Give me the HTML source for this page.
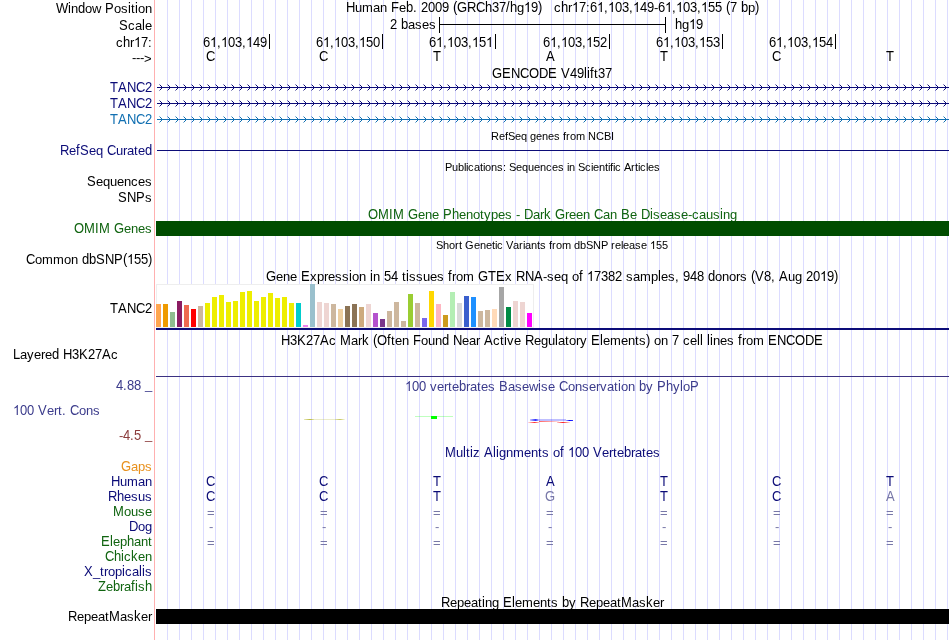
<!DOCTYPE html>
<html><head><meta charset="utf-8"><style>
html,body{margin:0;padding:0;background:#fff;width:950px;height:640px;overflow:hidden}
svg{display:block;will-change:transform}
text{font-family:"Liberation Sans",sans-serif;white-space:pre}
</style></head><body>
<svg width="950" height="640" viewBox="0 0 950 640">
<rect width="950" height="640" fill="#fff"/>
<defs><path id="one" d="M763 0L583 0L583 1147Q518 1085 412 1023Q306 961 222 930L222 1104Q373 1175 486 1276Q599 1377 646 1472L763 1472Z"/></defs>
<rect x="167" y="0" width="1" height="640" fill="#dcdcff"/>
<rect x="179" y="0" width="1" height="640" fill="#dcdcff"/>
<rect x="191" y="0" width="1" height="640" fill="#dcdcff"/>
<rect x="203" y="0" width="1" height="640" fill="#dcdcff"/>
<rect x="215" y="0" width="1" height="640" fill="#dcdcff"/>
<rect x="227" y="0" width="1" height="640" fill="#dcdcff"/>
<rect x="239" y="0" width="1" height="640" fill="#dcdcff"/>
<rect x="251" y="0" width="1" height="640" fill="#dcdcff"/>
<rect x="263" y="0" width="1" height="640" fill="#dcdcff"/>
<rect x="275" y="0" width="1" height="640" fill="#dcdcff"/>
<rect x="287" y="0" width="1" height="640" fill="#dcdcff"/>
<rect x="299" y="0" width="1" height="640" fill="#dcdcff"/>
<rect x="311" y="0" width="1" height="640" fill="#dcdcff"/>
<rect x="323" y="0" width="1" height="640" fill="#dcdcff"/>
<rect x="335" y="0" width="1" height="640" fill="#dcdcff"/>
<rect x="347" y="0" width="1" height="640" fill="#dcdcff"/>
<rect x="359" y="0" width="1" height="640" fill="#dcdcff"/>
<rect x="371" y="0" width="1" height="640" fill="#dcdcff"/>
<rect x="383" y="0" width="1" height="640" fill="#dcdcff"/>
<rect x="395" y="0" width="1" height="640" fill="#dcdcff"/>
<rect x="407" y="0" width="1" height="640" fill="#dcdcff"/>
<rect x="419" y="0" width="1" height="640" fill="#dcdcff"/>
<rect x="431" y="0" width="1" height="640" fill="#dcdcff"/>
<rect x="443" y="0" width="1" height="640" fill="#dcdcff"/>
<rect x="455" y="0" width="1" height="640" fill="#dcdcff"/>
<rect x="467" y="0" width="1" height="640" fill="#dcdcff"/>
<rect x="479" y="0" width="1" height="640" fill="#dcdcff"/>
<rect x="491" y="0" width="1" height="640" fill="#dcdcff"/>
<rect x="503" y="0" width="1" height="640" fill="#dcdcff"/>
<rect x="515" y="0" width="1" height="640" fill="#dcdcff"/>
<rect x="527" y="0" width="1" height="640" fill="#dcdcff"/>
<rect x="539" y="0" width="1" height="640" fill="#dcdcff"/>
<rect x="551" y="0" width="1" height="640" fill="#dcdcff"/>
<rect x="563" y="0" width="1" height="640" fill="#dcdcff"/>
<rect x="575" y="0" width="1" height="640" fill="#dcdcff"/>
<rect x="587" y="0" width="1" height="640" fill="#dcdcff"/>
<rect x="599" y="0" width="1" height="640" fill="#dcdcff"/>
<rect x="611" y="0" width="1" height="640" fill="#dcdcff"/>
<rect x="623" y="0" width="1" height="640" fill="#dcdcff"/>
<rect x="635" y="0" width="1" height="640" fill="#dcdcff"/>
<rect x="647" y="0" width="1" height="640" fill="#dcdcff"/>
<rect x="659" y="0" width="1" height="640" fill="#dcdcff"/>
<rect x="671" y="0" width="1" height="640" fill="#dcdcff"/>
<rect x="683" y="0" width="1" height="640" fill="#dcdcff"/>
<rect x="695" y="0" width="1" height="640" fill="#dcdcff"/>
<rect x="707" y="0" width="1" height="640" fill="#dcdcff"/>
<rect x="719" y="0" width="1" height="640" fill="#dcdcff"/>
<rect x="731" y="0" width="1" height="640" fill="#dcdcff"/>
<rect x="743" y="0" width="1" height="640" fill="#dcdcff"/>
<rect x="755" y="0" width="1" height="640" fill="#dcdcff"/>
<rect x="767" y="0" width="1" height="640" fill="#dcdcff"/>
<rect x="779" y="0" width="1" height="640" fill="#dcdcff"/>
<rect x="791" y="0" width="1" height="640" fill="#dcdcff"/>
<rect x="803" y="0" width="1" height="640" fill="#dcdcff"/>
<rect x="815" y="0" width="1" height="640" fill="#dcdcff"/>
<rect x="827" y="0" width="1" height="640" fill="#dcdcff"/>
<rect x="839" y="0" width="1" height="640" fill="#dcdcff"/>
<rect x="851" y="0" width="1" height="640" fill="#dcdcff"/>
<rect x="863" y="0" width="1" height="640" fill="#dcdcff"/>
<rect x="875" y="0" width="1" height="640" fill="#dcdcff"/>
<rect x="887" y="0" width="1" height="640" fill="#dcdcff"/>
<rect x="899" y="0" width="1" height="640" fill="#dcdcff"/>
<rect x="911" y="0" width="1" height="640" fill="#dcdcff"/>
<rect x="923" y="0" width="1" height="640" fill="#dcdcff"/>
<rect x="935" y="0" width="1" height="640" fill="#dcdcff"/>
<rect x="947" y="0" width="1" height="640" fill="#dcdcff"/>
<rect x="154" y="0" width="1" height="640" fill="#ffb0b0"/>
<text x="71 85 92 114 121 131 138 145" y="13" fill="#000" font-size="13">nowoston</text>
<text x="56 68 78 105 128 135" y="13" fill="#000" font-size="13" transform="matrix(1 0 0 1.111 0 -1.443)">WidPii</text>
<text x="128 135 145" y="30" fill="#000" font-size="13">cae</text>
<text x="119 142" y="30" fill="#000" font-size="13" transform="matrix(1 0 0 1.111 0 -3.330)">Sl</text>
<use href="#one" fill="#000" transform="matrix(0.006348 0 0 -0.006793 134 47)"/>
<text x="116 130 148" y="47" fill="#000" font-size="13">cr:</text>
<text x="123 141" y="47" fill="#000" font-size="13" transform="matrix(1 0 0 1.111 0 -5.217)">h7</text>
<text x="132 136 140" y="62" fill="#000" font-size="13">---</text>
<text x="144" y="63" fill="#000" font-size="13">&gt;</text>
<text x="110 118 127 136 145" y="92" fill="#0c0c78" font-size="13" transform="matrix(1 0 0 1.111 0 -10.212)">TANC2</text>
<text x="110 118 127 136 145" y="108" fill="#0c0c78" font-size="13" transform="matrix(1 0 0 1.111 0 -11.988)">TANC2</text>
<text x="110 118 127 136 145" y="124" fill="#1270b2" font-size="13" transform="matrix(1 0 0 1.111 0 -13.764)">TANC2</text>
<text x="69 89 96 116 123 127 134 138" y="155" fill="#0c0c78" font-size="13">eequrate</text>
<text x="60 76 80 107 145" y="155" fill="#0c0c78" font-size="13" transform="matrix(1 0 0 1.111 0 -17.205)">RfSCd</text>
<text x="96 103 110 117 124 131 138 145" y="186" fill="#000" font-size="13">equences</text>
<text x="87" y="186" fill="#000" font-size="13" transform="matrix(1 0 0 1.111 0 -20.646)">S</text>
<text x="145" y="202" fill="#000" font-size="13">s</text>
<text x="118 127 136" y="202" fill="#000" font-size="13" transform="matrix(1 0 0 1.111 0 -22.422)">SNP</text>
<text x="124 131 138 145" y="233" fill="#106410" font-size="13">enes</text>
<text x="74 84 95 99 114" y="233" fill="#106410" font-size="13" transform="matrix(1 0 0 1.111 0 -25.863)">OMIMG</text>
<use href="#one" fill="#000" transform="matrix(0.006348 0 0 -0.006793 127 264)"/>
<text x="35 42 53 64 71" y="264" fill="#000" font-size="13">ommon</text>
<text x="26 82 89 96 105 114 123 134 141 148" y="264" fill="#000" font-size="13" transform="matrix(1 0 0 1.111 0 -29.304)">CdbSNP(55)</text>
<text x="110 118 127 136 145" y="313" fill="#000" font-size="13" transform="matrix(1 0 0 1.111 0 -34.743)">TANC2</text>
<text x="20 27 34 41 45 111" y="359" fill="#000" font-size="13">ayerec</text>
<text x="13 52 63 72 79 88 95 102" y="359" fill="#000" font-size="13" transform="matrix(1 0 0 1.111 0 -39.849)">LdH3K27A</text>
<text x="123" y="390" fill="#3c3c8c" font-size="13">.</text>
<text x="116 127 134" y="390" fill="#3c3c8c" font-size="13" transform="matrix(1 0 0 1.111 0 -43.290)">488</text>
<text x="145" y="389" fill="#3c3c8c" font-size="13">_</text>
<use href="#one" fill="#3c3c8c" transform="matrix(0.006348 0 0 -0.006793 13 415)"/>
<text x="47 54 58 62 79 86 93" y="415" fill="#3c3c8c" font-size="13">ert.ons</text>
<text x="20 27 38 70" y="415" fill="#3c3c8c" font-size="13" transform="matrix(1 0 0 1.111 0 -46.065)">00VC</text>
<text x="119 130" y="440" fill="#8c3c3c" font-size="13">-.</text>
<text x="123 134" y="440" fill="#8c3c3c" font-size="13" transform="matrix(1 0 0 1.111 0 -48.840)">45</text>
<text x="145" y="439" fill="#8c3c3c" font-size="13">_</text>
<text x="131 138 145" y="471" fill="#e8901c" font-size="13">aps</text>
<text x="121" y="471" fill="#e8901c" font-size="13" transform="matrix(1 0 0 1.111 0 -52.281)">G</text>
<text x="120 127 138 145" y="486" fill="#0c0c78" font-size="13">uman</text>
<text x="111" y="486" fill="#0c0c78" font-size="13" transform="matrix(1 0 0 1.111 0 -53.946)">H</text>
<text x="124 131 138 145" y="501" fill="#0c0c78" font-size="13">esus</text>
<text x="108 117" y="501" fill="#0c0c78" font-size="13" transform="matrix(1 0 0 1.111 0 -55.611)">Rh</text>
<text x="124 131 138 145" y="516" fill="#106410" font-size="13">ouse</text>
<text x="113" y="516" fill="#106410" font-size="13" transform="matrix(1 0 0 1.111 0 -57.276)">M</text>
<text x="138 145" y="531" fill="#0c0c78" font-size="13">og</text>
<text x="129" y="531" fill="#0c0c78" font-size="13" transform="matrix(1 0 0 1.111 0 -58.941)">D</text>
<text x="113 120 134 141 148" y="546" fill="#106410" font-size="13">epant</text>
<text x="101 110 127" y="546" fill="#106410" font-size="13" transform="matrix(1 0 0 1.111 0 -60.606)">Elh</text>
<text x="124 138 145" y="561" fill="#106410" font-size="13">cen</text>
<text x="105 114 121 131" y="561" fill="#106410" font-size="13" transform="matrix(1 0 0 1.111 0 -62.271)">Chik</text>
<text x="93 100 104 108 115 125 132 145" y="576" fill="#0c0c78" font-size="13">_tropcas</text>
<text x="84 122 139 142" y="576" fill="#0c0c78" font-size="13" transform="matrix(1 0 0 1.111 0 -63.936)">Xili</text>
<text x="106 120 124 138" y="591" fill="#106410" font-size="13">eras</text>
<text x="98 113 131 135 145" y="591" fill="#106410" font-size="13" transform="matrix(1 0 0 1.111 0 -65.601)">Zbfih</text>
<text x="77 84 91 98 105 120 127 141 148" y="621" fill="#000" font-size="13">epeataser</text>
<text x="68 109 134" y="621" fill="#000" font-size="13" transform="matrix(1 0 0 1.111 0 -68.931)">RMk</text>
<use href="#one" fill="#000" transform="matrix(0.006348 0 0 -0.006793 524 12)"/>
<use href="#one" fill="#000" transform="matrix(0.006348 0 0 -0.006793 572 12)"/>
<use href="#one" fill="#000" transform="matrix(0.006348 0 0 -0.006793 597 12)"/>
<use href="#one" fill="#000" transform="matrix(0.006348 0 0 -0.006793 608 12)"/>
<use href="#one" fill="#000" transform="matrix(0.006348 0 0 -0.006793 633 12)"/>
<use href="#one" fill="#000" transform="matrix(0.006348 0 0 -0.006793 665 12)"/>
<use href="#one" fill="#000" transform="matrix(0.006348 0 0 -0.006793 676 12)"/>
<use href="#one" fill="#000" transform="matrix(0.006348 0 0 -0.006793 701 12)"/>
<text x="355 362 373 380 399 413 517 554 568 586 604 629 654 672 697 748" y="12" fill="#000" font-size="13">umane.gcr:,,-,,p</text>
<text x="346 391 406 421 428 435 442 453 457 467 476 485 492 499 506 510 531 538 561 579 590 615 622 640 647 658 683 690 708 715 726 730 741 755" y="12" fill="#000" font-size="13" transform="matrix(1 0 0 1.111 0 -1.332)">HFb2009(GRCh37/h9)h76034960355(7b)</text>
<rect x="439" y="17" width="1" height="16" fill="#000"/><rect x="665" y="17" width="1" height="16" fill="#000"/><rect x="439" y="24" width="227" height="1" fill="#000"/>
<text x="408 415 422 429" y="29" fill="#000" font-size="13">ases</text>
<text x="390 401" y="29" fill="#000" font-size="13" transform="matrix(1 0 0 1.111 0 -3.219)">2b</text>
<use href="#one" fill="#000" transform="matrix(0.006348 0 0 -0.006793 689 29)"/>
<text x="682" y="29" fill="#000" font-size="13">g</text>
<text x="675 696" y="29" fill="#000" font-size="13" transform="matrix(1 0 0 1.111 0 -3.219)">h9</text>
<rect x="269" y="34" width="1" height="15" fill="#000"/>
<use href="#one" fill="#000" transform="matrix(0.006348 0 0 -0.006793 210 47)"/>
<use href="#one" fill="#000" transform="matrix(0.006348 0 0 -0.006793 221 47)"/>
<use href="#one" fill="#000" transform="matrix(0.006348 0 0 -0.006793 246 47)"/>
<text x="217 242" y="47" fill="#000" font-size="13">,,</text>
<text x="203 228 235 253 260" y="47" fill="#000" font-size="13" transform="matrix(1 0 0 1.111 0 -5.217)">60349</text>
<rect x="382" y="34" width="1" height="15" fill="#000"/>
<use href="#one" fill="#000" transform="matrix(0.006348 0 0 -0.006793 323 47)"/>
<use href="#one" fill="#000" transform="matrix(0.006348 0 0 -0.006793 334 47)"/>
<use href="#one" fill="#000" transform="matrix(0.006348 0 0 -0.006793 359 47)"/>
<text x="330 355" y="47" fill="#000" font-size="13">,,</text>
<text x="316 341 348 366 373" y="47" fill="#000" font-size="13" transform="matrix(1 0 0 1.111 0 -5.217)">60350</text>
<rect x="495" y="34" width="1" height="15" fill="#000"/>
<use href="#one" fill="#000" transform="matrix(0.006348 0 0 -0.006793 436 47)"/>
<use href="#one" fill="#000" transform="matrix(0.006348 0 0 -0.006793 447 47)"/>
<use href="#one" fill="#000" transform="matrix(0.006348 0 0 -0.006793 472 47)"/>
<use href="#one" fill="#000" transform="matrix(0.006348 0 0 -0.006793 486 47)"/>
<text x="443 468" y="47" fill="#000" font-size="13">,,</text>
<text x="429 454 461 479" y="47" fill="#000" font-size="13" transform="matrix(1 0 0 1.111 0 -5.217)">6035</text>
<rect x="609" y="34" width="1" height="15" fill="#000"/>
<use href="#one" fill="#000" transform="matrix(0.006348 0 0 -0.006793 550 47)"/>
<use href="#one" fill="#000" transform="matrix(0.006348 0 0 -0.006793 561 47)"/>
<use href="#one" fill="#000" transform="matrix(0.006348 0 0 -0.006793 586 47)"/>
<text x="557 582" y="47" fill="#000" font-size="13">,,</text>
<text x="543 568 575 593 600" y="47" fill="#000" font-size="13" transform="matrix(1 0 0 1.111 0 -5.217)">60352</text>
<rect x="722" y="34" width="1" height="15" fill="#000"/>
<use href="#one" fill="#000" transform="matrix(0.006348 0 0 -0.006793 663 47)"/>
<use href="#one" fill="#000" transform="matrix(0.006348 0 0 -0.006793 674 47)"/>
<use href="#one" fill="#000" transform="matrix(0.006348 0 0 -0.006793 699 47)"/>
<text x="670 695" y="47" fill="#000" font-size="13">,,</text>
<text x="656 681 688 706 713" y="47" fill="#000" font-size="13" transform="matrix(1 0 0 1.111 0 -5.217)">60353</text>
<rect x="835" y="34" width="1" height="15" fill="#000"/>
<use href="#one" fill="#000" transform="matrix(0.006348 0 0 -0.006793 776 47)"/>
<use href="#one" fill="#000" transform="matrix(0.006348 0 0 -0.006793 787 47)"/>
<use href="#one" fill="#000" transform="matrix(0.006348 0 0 -0.006793 812 47)"/>
<text x="783 808" y="47" fill="#000" font-size="13">,,</text>
<text x="769 794 801 819 826" y="47" fill="#000" font-size="13" transform="matrix(1 0 0 1.111 0 -5.217)">60354</text>
<text x="206" y="61" fill="#000" font-size="13" transform="matrix(1 0 0 1.111 0 -6.771)">C</text>
<text x="319" y="61" fill="#000" font-size="13" transform="matrix(1 0 0 1.111 0 -6.771)">C</text>
<text x="433" y="61" fill="#000" font-size="13" transform="matrix(1 0 0 1.111 0 -6.771)">T</text>
<text x="546" y="61" fill="#000" font-size="13" transform="matrix(1 0 0 1.111 0 -6.771)">A</text>
<text x="660" y="61" fill="#000" font-size="13" transform="matrix(1 0 0 1.111 0 -6.771)">T</text>
<text x="772" y="61" fill="#000" font-size="13" transform="matrix(1 0 0 1.111 0 -6.771)">C</text>
<text x="886" y="61" fill="#000" font-size="13" transform="matrix(1 0 0 1.111 0 -6.771)">T</text>
<text x="594" y="78" fill="#000" font-size="13">t</text>
<text x="492 502 511 520 529 539 548 561 570 577 584 587 590 598 605" y="78" fill="#000" font-size="13" transform="matrix(1 0 0 1.111 0 -8.658)">GENCODEV49lif37</text>
<defs><pattern id="a1" x="159" y="84" width="8" height="7" patternUnits="userSpaceOnUse"><rect x="0" y="0" width="1" height="1" fill="#0c0c78" fill-opacity="0.45"/><rect x="1" y="1" width="1" height="1" fill="#0c0c78"/><rect x="2" y="2" width="1" height="3" fill="#0c0c78"/><rect x="1" y="5" width="1" height="1" fill="#0c0c78"/><rect x="0" y="6" width="1" height="1" fill="#0c0c78" fill-opacity="0.45"/></pattern></defs>
<rect x="157" y="87" width="792" height="1" fill="#0c0c78"/>
<rect x="159" y="84" width="787" height="7" fill="url(#a1)"/>
<defs><pattern id="a2" x="159" y="100" width="8" height="7" patternUnits="userSpaceOnUse"><rect x="0" y="0" width="1" height="1" fill="#0c0c78" fill-opacity="0.45"/><rect x="1" y="1" width="1" height="1" fill="#0c0c78"/><rect x="2" y="2" width="1" height="3" fill="#0c0c78"/><rect x="1" y="5" width="1" height="1" fill="#0c0c78"/><rect x="0" y="6" width="1" height="1" fill="#0c0c78" fill-opacity="0.45"/></pattern></defs>
<rect x="157" y="103" width="792" height="1" fill="#0c0c78"/>
<rect x="159" y="100" width="787" height="7" fill="url(#a2)"/>
<defs><pattern id="a3" x="159" y="116" width="8" height="7" patternUnits="userSpaceOnUse"><rect x="0" y="0" width="1" height="1" fill="#1270b2" fill-opacity="0.45"/><rect x="1" y="1" width="1" height="1" fill="#1270b2"/><rect x="2" y="2" width="1" height="3" fill="#1270b2"/><rect x="1" y="5" width="1" height="1" fill="#1270b2"/><rect x="0" y="6" width="1" height="1" fill="#1270b2" fill-opacity="0.45"/></pattern></defs>
<rect x="157" y="119" width="792" height="1" fill="#1270b2"/>
<rect x="159" y="116" width="787" height="7" fill="url(#a3)"/>
<text x="491 499 505 508 515 521 530 536 542 548 554 563 566 570 576 588 596 604 611" y="140" fill="#000" font-size="11">RefSeqgenesfromNCBI</text>
<rect x="157" y="150" width="792" height="1" fill="#0c0c78"/>
<text x="445 452 458 464 466 468 474 480 483 485 491 497 503 509 516 522 528 534 540 546 552 558 567 569 578 585 591 593 599 605 608 610 613 615 624 631 635 638 640 646 648 654" y="171" fill="#000" font-size="11">Publications:SequencesinScientificArticles</text>
<text x="418 425 432 459 466 473 480 484 491 498 505 516 533 540 565 569 576 583 603 610 630 653 660 667 674 681 688 692 699 706 713 723 730" y="219" fill="#106410" font-size="13">eneenotypes-arreenanesease-causng</text>
<text x="368 378 389 393 408 443 452 524 544 555 594 621 641 650 720" y="219" fill="#106410" font-size="13" transform="matrix(1 0 0 1.111 0 -24.309)">OMIMGPhDkGCBDii</text>
<rect x="156" y="221" width="793" height="15" fill="#004c00"/>
<use href="#one" fill="#000" transform="matrix(0.005371 0 0 -0.005435 650 249)"/>
<text x="436 443 449 455 459 465 474 480 486 492 495 497 506 513 519 523 525 531 537 540 549 552 556 562 574 580 586 593 601 611 615 621 623 629 635 641 656 662" y="249" fill="#000" font-size="11">ShortGeneticVariantsfromdbSNPrelease55</text>
<use href="#one" fill="#000" transform="matrix(0.006348 0 0 -0.006793 587 281)"/>
<use href="#one" fill="#000" transform="matrix(0.006348 0 0 -0.006793 820 281)"/>
<text x="276 283 290 310 317 324 328 335 342 352 359 373 402 409 416 423 430 437 452 456 463 505 543 547 554 561 572 626 633 640 651 661 668 675 715 722 729 736 740 771 788 795" y="281" fill="#000" font-size="13">enexpressonntssuesromx-seqosampes,onors,ug</text>
<text x="266 301 349 370 384 391 406 448 478 488 496 516 525 534 579 594 601 608 615 658 683 690 697 708 751 755 764 779 806 813 827 834" y="281" fill="#000" font-size="13" transform="matrix(1 0 0 1.111 0 -31.191)">GEii54ifGTERNAf7382l948d(V8A209)</text>
<rect x="156.5" y="284.5" width="377" height="43" fill="#fff" stroke="#eeeeee" stroke-width="1"/>
<rect x="156" y="304" width="5" height="23" fill="#FFA54F"/>
<rect x="163" y="304" width="5" height="23" fill="#EE9A00"/>
<rect x="170" y="312" width="5" height="15" fill="#8FBC8F"/>
<rect x="177" y="301" width="5" height="26" fill="#8B1C62"/>
<rect x="184" y="305" width="5" height="22" fill="#EE6A50"/>
<rect x="191" y="309" width="5" height="18" fill="#FF0000"/>
<rect x="198" y="306" width="5" height="21" fill="#CDB79E"/>
<rect x="205" y="303" width="5" height="24" fill="#EEEE00"/>
<rect x="212" y="297" width="5" height="30" fill="#EEEE00"/>
<rect x="219" y="295" width="5" height="32" fill="#EEEE00"/>
<rect x="226" y="302" width="5" height="25" fill="#EEEE00"/>
<rect x="233" y="301" width="5" height="26" fill="#EEEE00"/>
<rect x="240" y="292" width="5" height="35" fill="#EEEE00"/>
<rect x="247" y="291" width="5" height="36" fill="#EEEE00"/>
<rect x="254" y="301" width="5" height="26" fill="#EEEE00"/>
<rect x="261" y="297" width="5" height="30" fill="#EEEE00"/>
<rect x="268" y="293" width="5" height="34" fill="#EEEE00"/>
<rect x="275" y="298" width="5" height="29" fill="#EEEE00"/>
<rect x="282" y="297" width="5" height="30" fill="#EEEE00"/>
<rect x="289" y="303" width="5" height="24" fill="#EEEE00"/>
<rect x="296" y="303" width="5" height="24" fill="#00CDCD"/>
<rect x="303" y="325" width="5" height="2" fill="#EE82EE"/>
<rect x="310" y="284" width="5" height="43" fill="#9AC0CD"/>
<rect x="317" y="302" width="5" height="25" fill="#EED5D2"/>
<rect x="324" y="303" width="5" height="24" fill="#EED5D2"/>
<rect x="331" y="304" width="5" height="23" fill="#CDB79E"/>
<rect x="338" y="309" width="5" height="18" fill="#EECFA1"/>
<rect x="345" y="306" width="5" height="21" fill="#8B7355"/>
<rect x="352" y="304" width="5" height="23" fill="#8B7355"/>
<rect x="359" y="307" width="5" height="20" fill="#CDAA7D"/>
<rect x="366" y="304" width="5" height="23" fill="#EED5D2"/>
<rect x="373" y="313" width="5" height="14" fill="#B452CD"/>
<rect x="380" y="319" width="5" height="8" fill="#7A378B"/>
<rect x="387" y="311" width="5" height="16" fill="#CDB79E"/>
<rect x="394" y="302" width="5" height="25" fill="#CDB79E"/>
<rect x="401" y="321" width="5" height="6" fill="#CDB79E"/>
<rect x="408" y="294" width="5" height="33" fill="#9ACD32"/>
<rect x="415" y="303" width="5" height="24" fill="#CDB79E"/>
<rect x="422" y="318" width="5" height="9" fill="#7A67EE"/>
<rect x="429" y="291" width="5" height="36" fill="#FFD700"/>
<rect x="436" y="304" width="5" height="23" fill="#FFB6C1"/>
<rect x="443" y="315" width="5" height="12" fill="#CD9B1D"/>
<rect x="450" y="292" width="5" height="35" fill="#B4EEB4"/>
<rect x="457" y="303" width="5" height="24" fill="#D9D9D9"/>
<rect x="464" y="296" width="5" height="31" fill="#3A5FCD"/>
<rect x="471" y="297" width="5" height="30" fill="#1E90FF"/>
<rect x="478" y="311" width="5" height="16" fill="#CDB79E"/>
<rect x="485" y="310" width="5" height="17" fill="#CDB79E"/>
<rect x="492" y="309" width="5" height="18" fill="#FFDAB9"/>
<rect x="499" y="287" width="5" height="40" fill="#A6A6A6"/>
<rect x="506" y="307" width="5" height="20" fill="#008B45"/>
<rect x="513" y="301" width="5" height="26" fill="#EED5D2"/>
<rect x="520" y="302" width="5" height="25" fill="#EED5D2"/>
<rect x="527" y="313" width="5" height="14" fill="#FF00FF"/>
<rect x="156" y="328" width="793" height="2" fill="#0c0c78"/>
<text x="329 351 358 391 395 402 421 428 435 462 469 476 493 500 507 514 534 541 548 558 565 569 576 580 603 610 621 628 635 639 654 661 683 690 713 720 727 742 746 753" y="345" fill="#000" font-size="13">cartenounearctveeguatoryementsoncenesrom</text>
<text x="281 290 297 306 313 320 340 362 373 377 387 413 442 453 484 504 525 555 591 600 646 672 697 700 707 710 738 768 777 786 795 805 814" y="345" fill="#000" font-size="13" transform="matrix(1 0 0 1.111 0 -38.295)">H3K27AMk(OfFdNAiRlEl)7lllifENCODE</text>
<rect x="156" y="376" width="793" height="1" fill="#3c3282"/>
<use href="#one" fill="#3c3c8c" transform="matrix(0.006348 0 0 -0.006793 405 391)"/>
<text x="430 437 444 448 452 466 470 477 481 488 508 515 522 529 541 548 568 575 582 589 596 600 607 614 621 628 646 673 683" y="391" fill="#3c3c8c" font-size="13">verteratesasewseonservatonyyo</text>
<text x="412 419 459 499 538 559 618 639 657 666 680 690" y="391" fill="#3c3c8c" font-size="13" transform="matrix(1 0 0 1.111 0 -43.401)">00bBiCibPhlP</text>
<defs><linearGradient id="go1" x1="0" x2="1"><stop offset="0" stop-color="#b4b428" stop-opacity="0.3"/><stop offset="0.6" stop-color="#b4b428" stop-opacity="0.9"/><stop offset="1" stop-color="#b4b428" stop-opacity="0.4"/></linearGradient><linearGradient id="go2" x1="0" x2="1"><stop offset="0" stop-color="#b4b428" stop-opacity="0.35"/><stop offset="0.5" stop-color="#b4b428" stop-opacity="0.75"/><stop offset="1" stop-color="#b4b428" stop-opacity="0.1"/></linearGradient></defs>
<rect x="304" y="419" width="10" height="1" fill="url(#go1)"/><rect x="314" y="419" width="21" height="1" fill="#b4b428" fill-opacity="0.25"/><rect x="335" y="419" width="10" height="1" fill="url(#go2)"/>
<rect x="415" y="416" width="38" height="1" fill="#00ff00" fill-opacity="0.25"/><rect x="431" y="416" width="6" height="3" fill="#00ff00"/>
<defs><linearGradient id="gb1" x1="0" x2="1"><stop offset="0" stop-color="#00f" stop-opacity="0.2"/><stop offset="0.7" stop-color="#00f" stop-opacity="0.8"/><stop offset="1" stop-color="#00f" stop-opacity="0.4"/></linearGradient><linearGradient id="gb2" x1="0" x2="1"><stop offset="0" stop-color="#00f" stop-opacity="0.3"/><stop offset="0.5" stop-color="#00f" stop-opacity="1"/><stop offset="1" stop-color="#00f" stop-opacity="0.8"/></linearGradient><linearGradient id="gr1" x1="0" x2="1"><stop offset="0" stop-color="#f00" stop-opacity="0.1"/><stop offset="0.6" stop-color="#f00" stop-opacity="0.8"/><stop offset="1" stop-color="#f00" stop-opacity="0.2"/></linearGradient><linearGradient id="gr2" x1="0" x2="1"><stop offset="0" stop-color="#f00" stop-opacity="0.6"/><stop offset="0.6" stop-color="#f00" stop-opacity="0.35"/><stop offset="1" stop-color="#f00" stop-opacity="0.1"/></linearGradient><linearGradient id="gr3" x1="0" x2="1"><stop offset="0" stop-color="#f00" stop-opacity="0.2"/><stop offset="0.45" stop-color="#f00" stop-opacity="0.85"/><stop offset="1" stop-color="#f00" stop-opacity="0.1"/></linearGradient></defs>
<rect x="530" y="419" width="8" height="2" fill="url(#gb1)"/><rect x="538" y="419" width="28" height="2" fill="#00f" fill-opacity="0.25"/><rect x="566" y="420" width="7" height="1" fill="url(#gb2)"/>
<rect x="528" y="422" width="11" height="1" fill="url(#gr1)"/><rect x="539" y="421" width="20" height="1" fill="url(#gr2)"/><rect x="557" y="422" width="13" height="1" fill="url(#gr3)"/>
<use href="#one" fill="#0c0c78" transform="matrix(0.006348 0 0 -0.006793 568 457)"/>
<text x="456 466 473 499 506 513 524 531 538 542 553 602 609 613 617 631 635 642 646 653" y="457" fill="#0c0c78" font-size="13">utzgnmentsoerterates</text>
<text x="445 463 470 484 493 496 560 575 582 593 624" y="457" fill="#0c0c78" font-size="13" transform="matrix(1 0 0 1.111 0 -50.727)">MliAlif00Vb</text>
<text x="206" y="486" fill="#0c0c78" font-size="13" transform="matrix(1 0 0 1.111 0 -53.946)">C</text>
<text x="206" y="501" fill="#0c0c78" font-size="13" transform="matrix(1 0 0 1.111 0 -55.611)">C</text>
<text x="207" y="517" fill="#7878a8" font-size="13">=</text>
<text x="209" y="531" fill="#7878a8" font-size="13">-</text>
<text x="207" y="547" fill="#7878a8" font-size="13">=</text>
<text x="319" y="486" fill="#0c0c78" font-size="13" transform="matrix(1 0 0 1.111 0 -53.946)">C</text>
<text x="319" y="501" fill="#0c0c78" font-size="13" transform="matrix(1 0 0 1.111 0 -55.611)">C</text>
<text x="320" y="517" fill="#7878a8" font-size="13">=</text>
<text x="322" y="531" fill="#7878a8" font-size="13">-</text>
<text x="320" y="547" fill="#7878a8" font-size="13">=</text>
<text x="433" y="486" fill="#0c0c78" font-size="13" transform="matrix(1 0 0 1.111 0 -53.946)">T</text>
<text x="433" y="501" fill="#0c0c78" font-size="13" transform="matrix(1 0 0 1.111 0 -55.611)">T</text>
<text x="433" y="517" fill="#7878a8" font-size="13">=</text>
<text x="435" y="531" fill="#7878a8" font-size="13">-</text>
<text x="433" y="547" fill="#7878a8" font-size="13">=</text>
<text x="546" y="486" fill="#0c0c78" font-size="13" transform="matrix(1 0 0 1.111 0 -53.946)">A</text>
<text x="545" y="501" fill="#7878a8" font-size="13" transform="matrix(1 0 0 1.111 0 -55.611)">G</text>
<text x="546" y="517" fill="#7878a8" font-size="13">=</text>
<text x="548" y="531" fill="#7878a8" font-size="13">-</text>
<text x="546" y="547" fill="#7878a8" font-size="13">=</text>
<text x="660" y="486" fill="#0c0c78" font-size="13" transform="matrix(1 0 0 1.111 0 -53.946)">T</text>
<text x="660" y="501" fill="#0c0c78" font-size="13" transform="matrix(1 0 0 1.111 0 -55.611)">T</text>
<text x="660" y="517" fill="#7878a8" font-size="13">=</text>
<text x="662" y="531" fill="#7878a8" font-size="13">-</text>
<text x="660" y="547" fill="#7878a8" font-size="13">=</text>
<text x="772" y="486" fill="#0c0c78" font-size="13" transform="matrix(1 0 0 1.111 0 -53.946)">C</text>
<text x="772" y="501" fill="#0c0c78" font-size="13" transform="matrix(1 0 0 1.111 0 -55.611)">C</text>
<text x="773" y="517" fill="#7878a8" font-size="13">=</text>
<text x="775" y="531" fill="#7878a8" font-size="13">-</text>
<text x="773" y="547" fill="#7878a8" font-size="13">=</text>
<text x="886" y="486" fill="#0c0c78" font-size="13" transform="matrix(1 0 0 1.111 0 -53.946)">T</text>
<text x="886" y="501" fill="#7878a8" font-size="13" transform="matrix(1 0 0 1.111 0 -55.611)">A</text>
<text x="886" y="517" fill="#7878a8" font-size="13">=</text>
<text x="888" y="531" fill="#7878a8" font-size="13">-</text>
<text x="886" y="547" fill="#7878a8" font-size="13">=</text>
<text x="450 457 464 471 478 485 492 515 522 533 540 547 551 569 589 596 603 610 617 632 639 653 660" y="607" fill="#000" font-size="13">epeatngementsyepeataser</text>
<text x="441 482 503 512 562 580 621 646" y="607" fill="#000" font-size="13" transform="matrix(1 0 0 1.111 0 -67.377)">RiElbRMk</text>
<rect x="156" y="609" width="793" height="15" fill="#000"/>
</svg></body></html>
